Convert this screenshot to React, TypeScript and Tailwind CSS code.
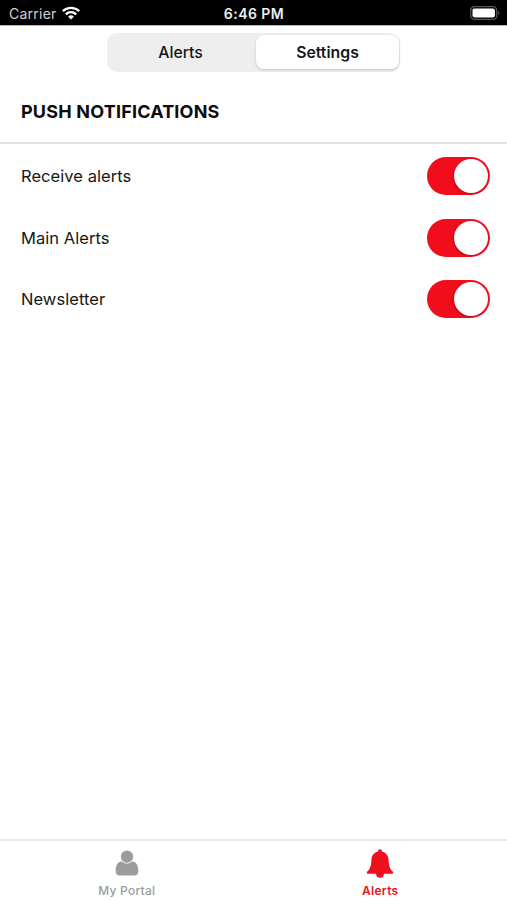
import React from "react";

function WifiIcon() {
  return (
    <svg width="18" height="14" viewBox="0 0 18 14" fill="none" stroke="#fff" strokeWidth="2.3" className="-mt-0.5">
      <path d="M0.8 5.2a11.8 11.8 0 0 1 16.4 0" />
      <path d="M3.8 8.3a7.5 7.5 0 0 1 10.4 0" />
      <path d="M9 13.6 6.1 10.7a4.1 4.1 0 0 1 5.8 0Z" fill="#fff" stroke="none" />
    </svg>
  );
}

function BatteryIcon() {
  return (
    <svg width="30" height="14" viewBox="0 0 30 14" className="-mt-0.5">
      <rect x="0.7" y="0.7" width="26" height="12.6" rx="3.6" fill="none" stroke="#555" strokeWidth="1.3" />
      <rect x="2.5" y="2.5" width="22.4" height="9" rx="2" fill="#fff" />
      <path d="M28.2 4.8c1.7.7 1.7 3.7 0 4.4Z" fill="#555" />
    </svg>
  );
}

function Toggle() {
  return (
    <button
      type="button"
      role="switch"
      aria-checked="true"
      className="flex h-[38px] w-[63px] items-center justify-end rounded-full bg-[#f20d1d] pr-0.5"
    >
      <span className="size-[34px] rounded-full bg-white shadow-[-1px_1px_2px_rgba(90,0,0,0.3)]" />
    </button>
  );
}

function SettingRow({ label, className }: { label: string; className: string }) {
  return (
    <div className={`flex items-center justify-between pr-[17px] pl-[21px] ${className}`}>
      <span className="text-[16.5px] leading-5 tracking-[0.06px]">{label}</span>
      <Toggle />
    </div>
  );
}

export default function App() {
  return (
    <div className="flex h-[900px] w-[507px] flex-col overflow-hidden bg-white font-['Inter','Liberation_Sans',sans-serif] text-[#161616]">
      <header className="grid h-[25px] shrink-0 grid-cols-3 items-center bg-black pt-0.5 pr-[7px] pl-[9px] text-white">
        <div className="flex items-center gap-[5px]">
          <span className="text-[14px] leading-5 tracking-[0.25px] text-[#d2d2d2]">Carrier</span>
          <WifiIcon />
        </div>
        <span className="-ml-px text-center text-[14px] leading-5 font-semibold tracking-[0.45px] text-[#eee]">6:46 PM</span>
        <div className="flex justify-end">
          <BatteryIcon />
        </div>
      </header>

      <div className="flex h-[55px] shrink-0 justify-center border-t border-[#b5b5b5] pt-[7px]">
        <div className="grid h-[39px] w-[293px] grid-cols-[147px_143px] gap-[2px] rounded-[10px] bg-[#eeeeef] py-0.5 pr-px text-[15.8px]">
          <button type="button" className="font-medium">Alerts</button>
          <button
            type="button"
            className="h-[34px] rounded-[8px] bg-white pt-px font-semibold shadow-[0_1px_3px_rgba(0,0,0,0.18)]"
          >
            Settings
          </button>
        </div>
      </div>

      <main className="flex-1">
        <h1 className="flex h-[64px] items-center border-b-2 border-[#e2e2e2] pl-[21px] text-[18px] font-bold tracking-[0.19px] text-[#0c0c0c]">
          PUSH NOTIFICATIONS
        </h1>
        <SettingRow label="Receive alerts" className="h-[63px]" />
        <SettingRow label="Main Alerts" className="h-[62px]" />
        <SettingRow label="Newsletter" className="h-[60px]" />
      </main>

      <nav className="grid h-[61px] shrink-0 grid-cols-2 border-t-2 border-[#ebebeb] text-[12px] leading-4">
        <a className="flex flex-col items-center pt-[9px] text-[#9c9c9c]">
          <svg width="24" height="27" viewBox="0 0 24 27" fill="currentColor">
            <circle cx="12" cy="6.7" r="6.2" />
            <path d="M6.8 11.6C2.4 11.8.7 15.8.7 20.9c0 2.9 1.6 4.6 4.2 4.6h14.2c2.6 0 4.2-1.7 4.2-4.6 0-5.1-1.7-9.1-6.1-9.3A7.8 7.8 0 0 1 12 13.7a7.8 7.8 0 0 1-5.2-2.1Z" />
          </svg>
          <span className="mt-1.5 font-medium tracking-[0.25px]">My Portal</span>
        </a>
        <a className="flex flex-col items-center pt-2 text-[#ee101e]">
          <svg width="28" height="30" viewBox="0 0 28 30" fill="currentColor">
            <path d="M14 .3c1.2 0 2 .9 1.9 2.1 4.1.8 6.5 4.1 6.7 8.5.3 6 1.3 9.1 4.2 11.6.8.7.5 2.3-.7 2.3h-8.2a3.9 3.9 0 0 1-7.8 0H1.9c-1.2 0-1.5-1.6-.7-2.3 2.9-2.5 3.9-5.6 4.2-11.6.2-4.4 2.6-7.7 6.7-8.5C12 1.2 12.8.3 14 .3Z" />
          </svg>
          <span className="mt-1 font-semibold tracking-[0.3px]">Alerts</span>
        </a>
      </nav>
    </div>
  );
}
